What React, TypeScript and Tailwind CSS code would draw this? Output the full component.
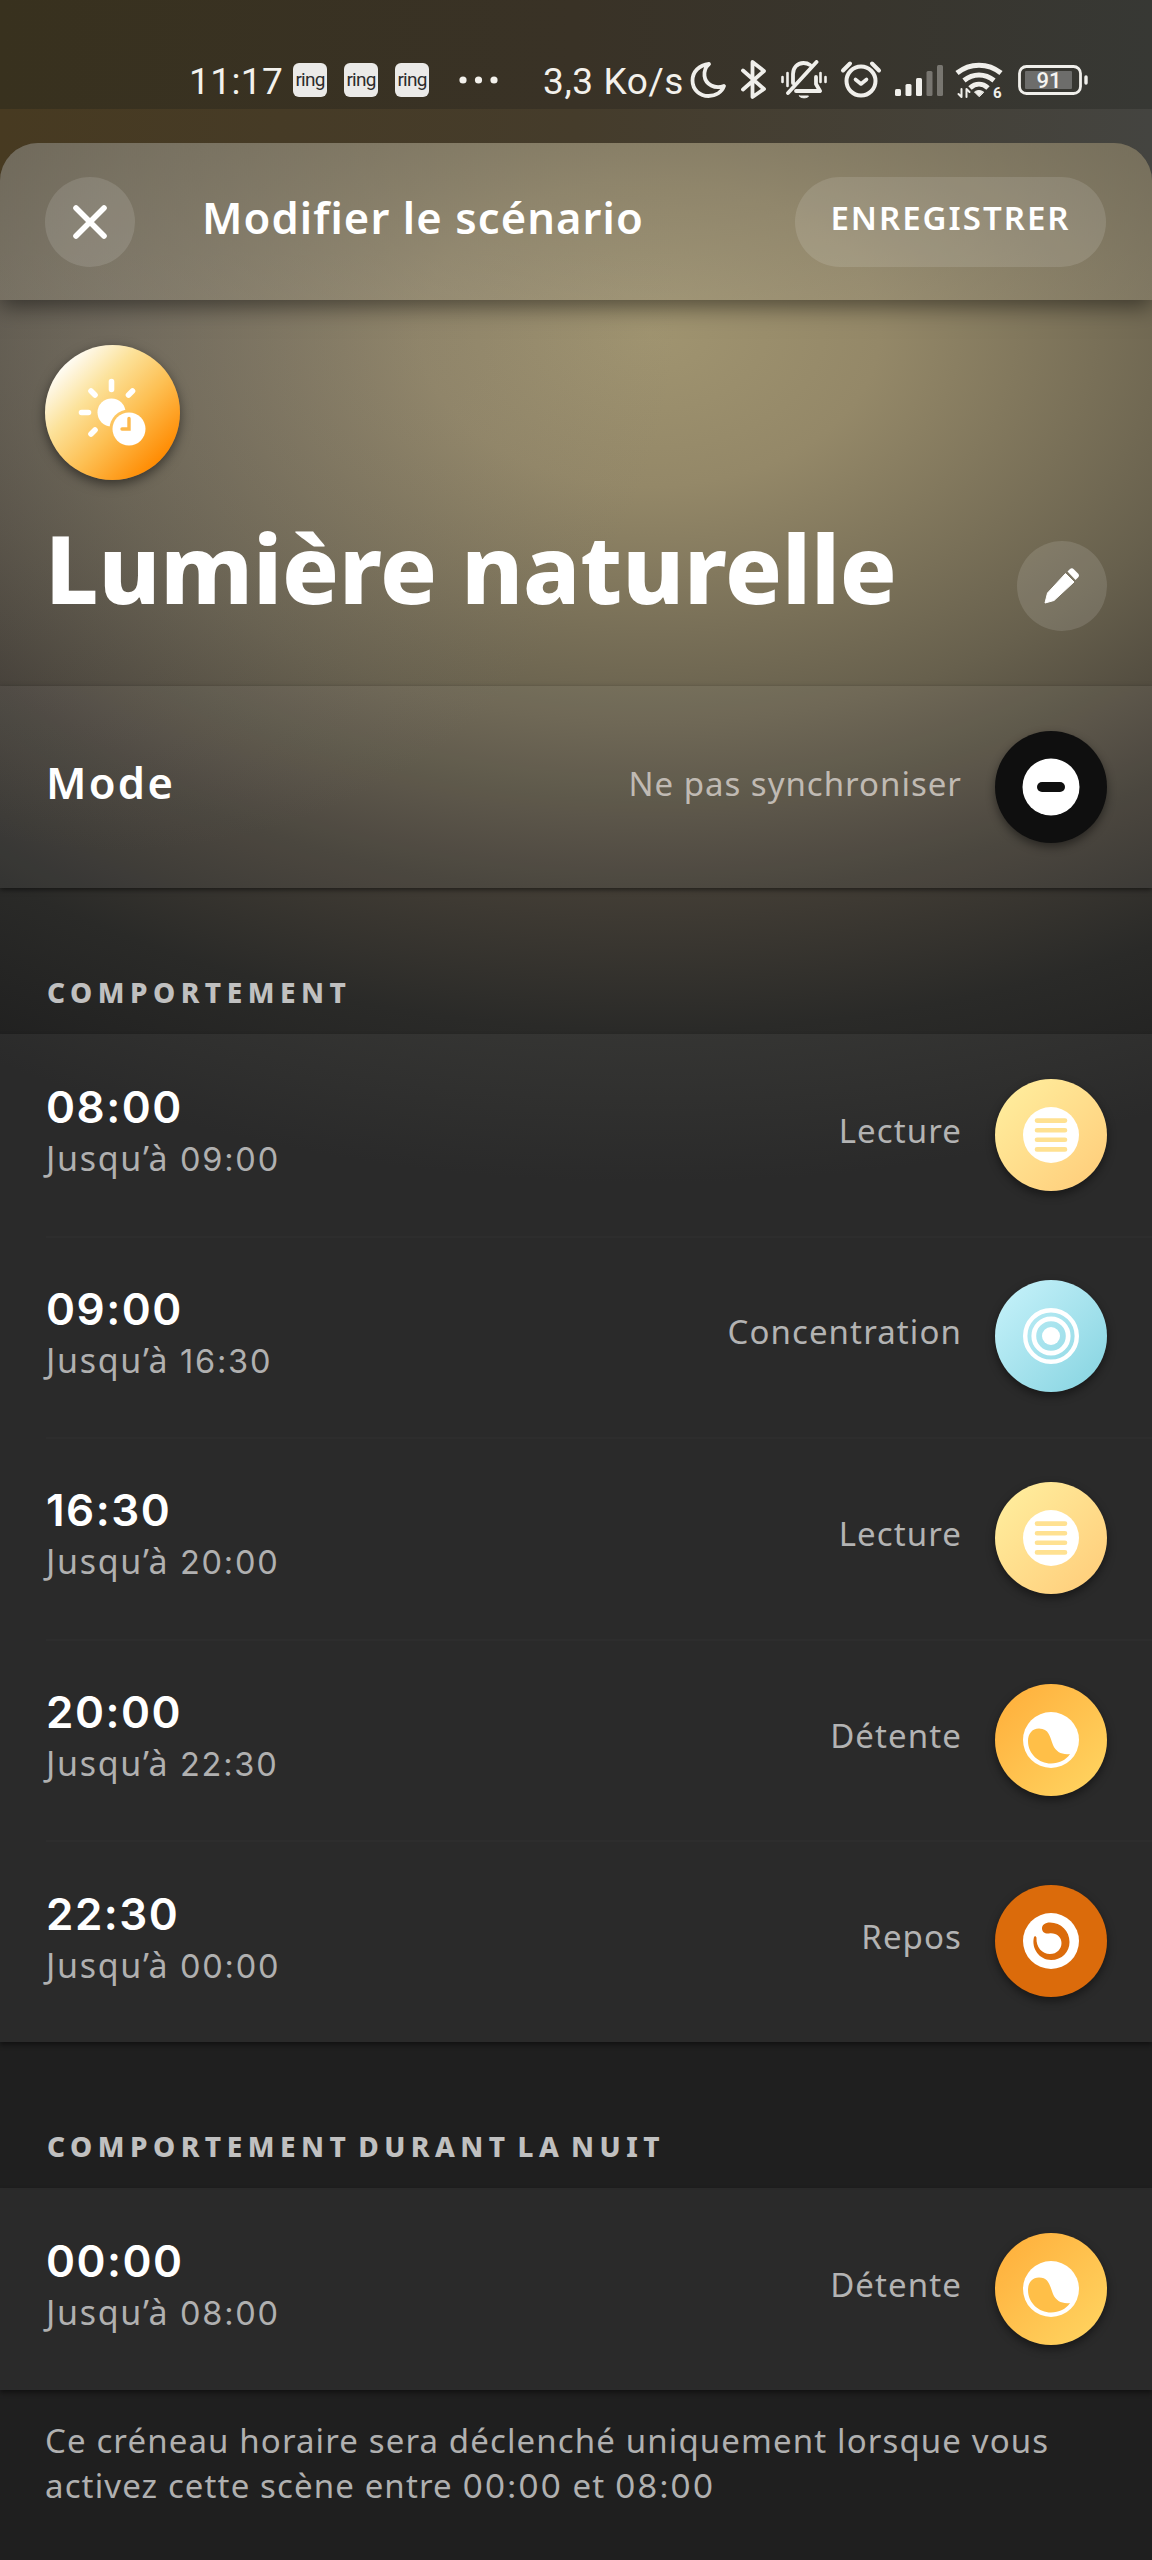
import React from "react"

type Scene = "sync" | "read" | "focus" | "relax" | "rest"

type Slot = {
  start: string
  end: string
  label: string
  scene: Scene
}

const daySlots: Slot[] = [
  { start: "08:00", end: "09:00", label: "Lecture", scene: "read" },
  { start: "09:00", end: "16:30", label: "Concentration", scene: "focus" },
  { start: "16:30", end: "20:00", label: "Lecture", scene: "read" },
  { start: "20:00", end: "22:30", label: "Détente", scene: "relax" },
  { start: "22:30", end: "00:00", label: "Repos", scene: "rest" },
]

const nightSlots: Slot[] = [
  { start: "00:00", end: "08:00", label: "Détente", scene: "relax" },
]

const sceneBackground: Record<Scene, string> = {
  sync: "bg-[#0f0f0f]",
  read: "bg-linear-to-br from-[#fff0a0] to-[#ffcb78]",
  focus: "bg-linear-to-br from-[#c8f3fb] to-[#84d3e0]",
  relax: "bg-linear-to-br from-[#ffad38] to-[#ffd662]",
  rest: "bg-[#db6b0b]",
}

const SceneGlyph = ({ scene }: { scene: Scene }) => {
  switch (scene) {
    case "sync":
      return (
        <>
          <circle r="28.5" fill="#fff" />
          <rect x="-14" y="-5" width="28" height="10" rx="5" fill="#0f0f0f" />
        </>
      )
    case "read":
      return (
        <>
          <circle r="28" fill="#fff" />
          <path d="M-14 -14.4H14M-14 -4.8H14M-14 4.8H14M-14 14.4H14" stroke="#ffe191" strokeWidth="4.6" strokeLinecap="round" />
        </>
      )
    case "focus":
      return (
        <g fill="none" stroke="#fff">
          <circle r="25.8" strokeWidth="4.4" />
          <circle r="17.2" strokeWidth="4.8" />
          <circle r="9" fill="#fff" stroke="none" />
        </g>
      )
    case "relax":
      return (
        <>
          <circle r="28" fill="#fff" />
          <path d="M-12 -11.5C-19 -11.5 -23 -6 -23 1C-23 14 -12 23.5 0 23.5C8 23.5 15 20 19 14C11 15 5 12 2 5C-1 -3 -2 -11.5 -12 -11.5Z" fill="#ffbf48" />
        </>
      )
    case "rest":
      return (
        <>
          <circle r="28" fill="#fff" />
          <path d="M-17 -4C-20 8 -11 19 0 19C11 19 18.5 11 18.5 1C18.5 -10 10 -18.5 -1 -18.5C-6 -18.5 -9 -16 -9 -12.5C-9 -9 -6 -7 -2 -7.5C5 -8.5 10.5 -4 10.5 2C10.5 8 6 13 -1 13C-9 13 -15 6 -14.5 -3C-14.5 -5 -16.5 -5.5 -17 -4Z" fill="#db6b0b" />
        </>
      )
  }
}

const SceneBadge = ({ scene }: { scene: Scene }) => (
  <div className={`h-28 w-28 shrink-0 rounded-full shadow-[0_4px_10px_rgba(0,0,0,0.45)] ${sceneBackground[scene]}`}>
    <svg viewBox="-56 -56 112 112" className="h-full w-full">
      <SceneGlyph scene={scene} />
    </svg>
  </div>
)

const StatusBar = () => (
  <div className="flex h-[109px] items-start bg-linear-to-r from-[#38311e] via-[#393226] to-[#373834] pt-[60px] pl-[189px] font-['Roboto',sans-serif] text-[#f3f1ec]">
    <span className="w-[104px] shrink-0 text-[37px] leading-11 tracking-[0.4px] whitespace-nowrap">11:17</span>
    <div className="flex shrink-0 gap-[17px] pt-[3px]">
      {[0, 1, 2].map((i) => (
        <div key={i} className="flex h-[34px] w-[34px] items-center justify-center rounded-[6px] bg-[#ebeae8]">
          <span className="text-[19px] leading-[22px] tracking-[-0.8px] text-[#2c2c2c]">ring</span>
        </div>
      ))}
    </div>
    <svg viewBox="0 0 46 40" className="ml-[27px] h-10 w-[46px] shrink-0" fill="#f3f1ec">
      <circle cx="7" cy="20" r="3.6" />
      <circle cx="22.5" cy="20" r="3.6" />
      <circle cx="38" cy="20" r="3.6" />
    </svg>
    <span className="ml-[41px] w-[146px] shrink-0 text-[37px] leading-11 tracking-[0.6px] whitespace-nowrap">3,3 Ko/s</span>
    <StatusIcons />
  </div>
)

const StatusIcons = () => (
  <svg viewBox="689 60 402 48" className="h-12 w-[402px] shrink-0" fill="none" stroke="#f0efeb" strokeWidth="4" strokeLinecap="round" strokeLinejoin="round">
    {/* do not disturb */}
    <path d="M709 64C699 65 692.500 72 692.500 80.500C692.500 90 700 96 708.500 96C716 96 722 92 724 86C715 89.500 705.500 84.500 704.500 76C704 71 705.500 67 709 64Z" strokeWidth="3.8" />
    {/* bluetooth */}
    <path d="M743 70.500L764 89L752.500 97V62L764 71L743 89.500" strokeWidth="3.8" />
    {/* muted bell */}
    <path d="M810 65C808 63.500 806 63 803.500 63C797 63 793 68 793 74V83M816 77V84L820 91H796M816.500 62L788 93" strokeWidth="3.8" />
    <path d="M799.500 96H808.500C807.500 98.500 800.500 98.500 799.500 96Z" fill="#f0efeb" strokeWidth="1" />
    <path d="M787.500 73V86M782.500 77V82M820.500 73V82M825.500 77V82" strokeWidth="2.600" />
    {/* alarm */}
    <circle cx="861" cy="81" r="14.500" />
    <path d="M843 70.500L850 63.500M879 70.500L872 63.500" />
    <path d="M855.500 79.500L861 84L866.500 79.500" strokeWidth="3.600" />
    {/* cell signal */}
    <g stroke="none" fill="#f0efeb">
      <rect x="895" y="89" width="6" height="7" rx="1.500" />
      <rect x="905.500" y="84" width="6" height="12" rx="1.500" />
      <rect x="916" y="78" width="6" height="18" rx="1.500" />
      <rect x="926.500" y="71" width="6" height="25" rx="1.500" fillOpacity="0.35" />
      <rect x="937" y="65" width="6" height="31" rx="1.500" fillOpacity="0.35" />
    </g>
    {/* wifi */}
    <path d="M957 73C970 62.500 988 62.500 1001 73M964 80.500C973 73 985 73 994 80.500M970 88C975.500 83 982.500 83 988 88" strokeWidth="5" strokeLinecap="butt" />
    <path d="M979 96.500L974.500 92C977 90 981 90 983.500 92Z" fill="#f0efeb" strokeWidth="1" />
    <path d="M961.500 89V97L958.500 94M966.500 97V89L969.500 92" strokeWidth="2" />
    <text x="993" y="98" fontSize="15" fontWeight="700" fill="#f0efeb" stroke="none">6</text>
    {/* battery */}
    <rect x="1019.500" y="66.500" width="61" height="27" rx="7" strokeWidth="2.800" />
    <rect x="1025" y="71" width="47" height="18" rx="1" fill="#6d6d6b" stroke="none" />
    <path d="M1086 77V83" strokeWidth="3.400" />
    <text x="1049" y="88" fontSize="22" fontWeight="500" textAnchor="middle" fill="#f5f4f1" stroke="none">91</text>
  </svg>
)

const Header = () => (
  <header className="relative flex h-[157px] items-center bg-linear-to-b from-[#837c69]/50 to-[#a39b86]/30 pr-[46px] pl-[45px] shadow-[0_6px_22px_rgba(0,0,0,0.5)]">
    <button className="h-[90px] w-[90px] rounded-full bg-white/12" aria-label="Fermer">
      <svg viewBox="-45 -45 90 90" className="h-full w-full" stroke="#fff" strokeWidth="5.6" strokeLinecap="round">
        <path d="M-14 -14L14 14M14 -14L-14 14" />
      </svg>
    </button>
    <h2 className="flex-1 pb-2.5 pl-[67px] text-[43.5px] leading-[60px] font-semibold tracking-[1.1px]">Modifier le scénario</h2>
    <button className="h-[90px] w-[311px] rounded-full bg-white/12 pb-2 text-[33px] leading-10 font-semibold tracking-[2px]">ENREGISTRER</button>
  </header>
)

const NaturalLightIcon = () => (
  <div className="h-[135px] w-[135px] rounded-full bg-linear-[135deg,#ffffff_12%,#fce29a_35%,#fdbf52_58%,#ff8a00_86%] shadow-[0_4px_12px_rgba(0,0,0,0.5)]">
    <svg viewBox="-67.5 -67.5 135 135" className="h-full w-full">
      <mask id="clock-cut">
        <rect x="-60" y="-60" width="120" height="120" fill="#fff" />
        <circle cx="16.500" cy="16.500" r="19.500" fill="#000" />
      </mask>
      <circle cx="-1" cy="0" r="14" fill="#fff" mask="url(#clock-cut)" />
      <path d="M-1 -31V-23M-21.500 -21.500L-17.500 -17.500M20 -21.500L16 -17.500M-31 0H-24M-21.500 21.500L-17.500 17.500" stroke="#fff" strokeWidth="5.600" strokeLinecap="round" />
      <circle cx="16.500" cy="16.500" r="16.500" fill="#fff" />
      <path d="M16.500 6V16.500H9.500" fill="none" stroke="#fdb94c" strokeWidth="3.400" strokeLinecap="round" />
    </svg>
  </div>
)

const Hero = () => (
  <section className="h-[386px] px-[45px] pt-[45px]">
    <NaturalLightIcon />
    <div className="mt-[31px] flex items-start justify-between">
      <h1 className="pt-0.5 text-[94px] leading-[110px] font-extrabold tracking-[-0.1px]">Lumière naturelle</h1>
      <button className="mt-[30px] h-[90px] w-[90px] rounded-full bg-white/12" aria-label="Renommer">
        <svg viewBox="-45 -45 90 90" className="h-full w-full" fill="#fff">
          <path d="M-17 17L-14.500 7L3.500 -12.500L12 -4L-8 14.500Z" stroke="#fff" strokeWidth="1" strokeLinejoin="round" />
          <path d="M5.500 -14.500L8 -17Q10 -18.500 12 -16.500L16 -12.500Q18 -10.500 16 -8.500L13.500 -6Z" />
        </svg>
      </button>
    </div>
  </section>
)

const SectionTitle = ({ children }: { children: React.ReactNode }) => (
  <h3 className="h-[146px] pt-[88px] pl-[47px] text-[28px] leading-8 font-extrabold tracking-[5.5px] text-[#c0c0c0] [word-spacing:-6px]">{children}</h3>
)

const Card = ({ children }: { children: React.ReactNode }) => (
  <div className="bg-white/5 shadow-[0_3px_5px_rgba(0,0,0,0.45)]">{children}</div>
)

// digits are set in a wider face than the words around them
const Time = ({ value }: { value: string }) => (
  <span className="font-['Inter',sans-serif] text-[32.5px] tracking-[1.8px]">{value}</span>
)

const SlotRow = ({ slot, divided }: { slot: Slot; divided: boolean }) => (
  <div className="pl-[46px]">
    <div className={`flex h-[201.6px] items-center justify-between pr-[45px] ${divided ? "shadow-[inset_0_2px_0_rgba(255,255,255,0.015)]" : ""}`}>
      <div className="pb-[3px]">
        <p className="font-['Inter',sans-serif] text-[44px] leading-[52px] font-semibold tracking-[1.5px]">{slot.start}</p>
        <p className="text-[34px] leading-[50px] tracking-[1.7px] text-[#b0b0b0]">
          Jusqu’à <Time value={slot.end} />
        </p>
      </div>
      <div className="flex items-center gap-[33px]">
        <span className="pb-2 text-[33px] leading-10 tracking-[1.1px] text-[#b3b3b3]">{slot.label}</span>
        <SceneBadge scene={slot.scene} />
      </div>
    </div>
  </div>
)

export default function App() {
  return (
    <div className="h-[2560px] w-[1152px] overflow-hidden bg-linear-to-r from-[#473a21] via-[#453c2b] to-[#444440] font-['Noto_Sans','Open_Sans',sans-serif] text-white">
      <StatusBar />
      <div className="mt-[34px] h-[2417px] overflow-hidden rounded-t-[38px] bg-[#1f1f1f] bg-[radial-gradient(560px_560px_at_120px_150px,rgba(118,114,118,0.34),rgba(110,108,112,0)),radial-gradient(1275px_850px_at_650px_190px,#a09470_0%,#948868_18%,#67604d_46%,#423d35_66%,#2a2a28_82%,#1f1f1f_100%)]">
        <Header />
        <Hero />
        <div className="bg-white/5 shadow-[0_2px_5px_rgba(0,0,0,0.5)]">
          <div className="flex h-[202px] items-center justify-between pr-[45px] pl-[46px]">
            <p className="pb-2.5 text-[43.5px] leading-[52px] font-semibold tracking-[2.3px]">Mode</p>
            <div className="flex items-center gap-[33px]">
              <span className="pb-1.5 text-[33px] leading-10 tracking-[1px] text-[#c0bab3]">Ne pas synchroniser</span>
              <SceneBadge scene="sync" />
            </div>
          </div>
        </div>
        <SectionTitle>COMPORTEMENT</SectionTitle>
        <Card>
          {daySlots.map((slot, i) => (
            <SlotRow key={slot.start} slot={slot} divided={i > 0} />
          ))}
        </Card>
        <SectionTitle>COMPORTEMENT DURANT LA NUIT</SectionTitle>
        <Card>
          {nightSlots.map((slot) => (
            <SlotRow key={slot.start} slot={slot} divided={false} />
          ))}
        </Card>
        <p className="pt-7 pl-[45px] text-[33px] leading-[45px] tracking-[1.12px] whitespace-nowrap text-[#b0b0b0]">
          Ce créneau horaire sera déclenché uniquement lorsque vous
          <br />
          activez cette scène entre <Time value="00:00" /> et <Time value="08:00" />
        </p>
      </div>
    </div>
  )
}
